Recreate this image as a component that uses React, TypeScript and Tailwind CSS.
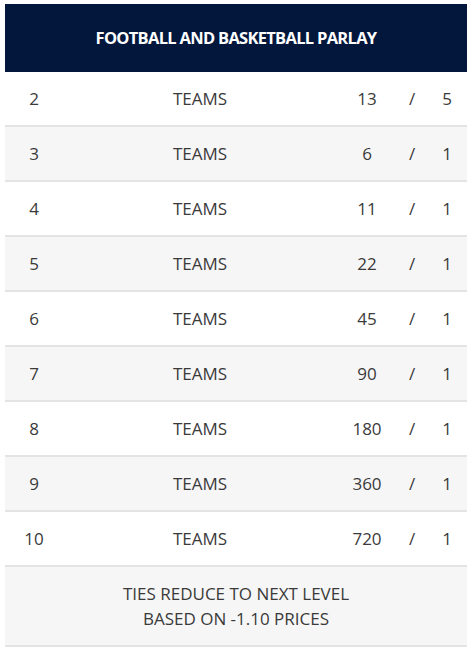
import React from "react";

const rows: [string, string, string][] = [
  ["2", "13", "5"],
  ["3", "6", "1"],
  ["4", "11", "1"],
  ["5", "22", "1"],
  ["6", "45", "1"],
  ["7", "90", "1"],
  ["8", "180", "1"],
  ["9", "360", "1"],
  ["10", "720", "1"],
];

export default function App() {
  return (
    <div className="w-[474px] h-[654px] bg-white pt-[4px] pl-[5px]" style={{ fontFamily: '"Open Sans", sans-serif' }}>
      <div className="w-[462px]">
        <div className="h-[68px] bg-[#03173d] flex items-center justify-center">
          <span className="text-white font-bold text-[16.5px] tracking-[-0.7px]">FOOTBALL AND BASKETBALL PARLAY</span>
        </div>
        {rows.map((r, i) => (
          <div
            key={r[0]}
            className={`h-[55px] grid grid-cols-[58px_274px_60px_30px_40px] items-center border-b-2 border-[#e4e4e4] text-[17px] text-[#3a3a3a] ${i % 2 === 1 ? "bg-[#f6f6f6]" : "bg-white"}`}
          >
            <div className="text-center">{r[0]}</div>
            <div className="text-center">TEAMS</div>
            <div className="text-center">{r[1]}</div>
            <div className="text-center">/</div>
            <div className="text-center">{r[2]}</div>
          </div>
        ))}
        <div className="h-[80px] bg-[#f6f6f6] border-b-2 border-[#e4e4e4] flex flex-col items-center justify-center text-[17px] leading-[25px] text-[#3a3a3a]">
          <div>TIES REDUCE TO NEXT LEVEL</div>
          <div>BASED ON -1.10 PRICES</div>
        </div>
      </div>
    </div>
  );
}
